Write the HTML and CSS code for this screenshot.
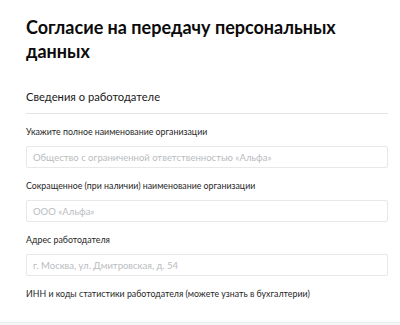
FILE: index.html
```html
<!DOCTYPE html>
<html lang="ru">
<head>
<meta charset="utf-8">
<title>Согласие на передачу персональных данных</title>
<link rel="stylesheet" href="styles.css">
</head>
<body>
<main class="page">
  <h1 class="title">Согласие на передачу персональных данных</h1>
  <h2 class="section-title">Сведения о работодателе</h2>
  <div class="field">
    <label class="label">Укажите полное наименование организации</label>
    <div class="input placeholder">Общество с ограниченной ответственностью «Альфа»</div>
  </div>
  <div class="field">
    <label class="label">Сокращенное (при наличии) наименование организации</label>
    <div class="input placeholder">ООО «Альфа»</div>
  </div>
  <div class="field">
    <label class="label">Адрес работодателя</label>
    <div class="input placeholder">г. Москва, ул. Дмитровская, д. 54</div>
  </div>
  <div class="field">
    <label class="label">ИНН и коды статистики работодателя (можете узнать в бухгалтерии)</label>
  </div>
</main>
<div class="footer"></div>
</body>
</html>
```
FILE: styles.css
```css
html, body {
  margin: 0;
  padding: 0;
  background: #ffffff;
}
body {
  font-family: Lato, "Liberation Sans", sans-serif;
  color: #0b1f35;
  height: 100vh;
  display: flex;
  flex-direction: column;
  overflow: hidden;
}
.page {
  padding: 15px 12px 21px 26px;
}
.title {
  margin: 0;
  font-size: 18px;
  line-height: 24px;
  font-weight: 700;
  color: #0b0b0b;
}
.section-title {
  margin: 26px 0 0 0;
  padding-bottom: 8px;
  border-bottom: 1px solid #e4e4e4;
  font-size: 11.2px;
  line-height: 16px;
  font-weight: 400;
  color: #1a1a1a;
}
.field {
  display: flex;
  flex-direction: column;
  margin-top: 11px;
}
.label {
  font-size: 8.8px;
  line-height: 14px;
  color: #262626;
}
.input {
  margin-top: 7px;
  height: 20px;
  border: 1px solid #e8e8e8;
  border-radius: 2px;
  padding: 0 6px;
  display: flex;
  align-items: center;
  font-size: 9.5px;
  background: #fff;
}
.placeholder {
  color: #b9bcc0;
}
.footer {
  flex: 1;
  background: #f6f6f6;
  border-top: 1px solid #efefef;
}
```
